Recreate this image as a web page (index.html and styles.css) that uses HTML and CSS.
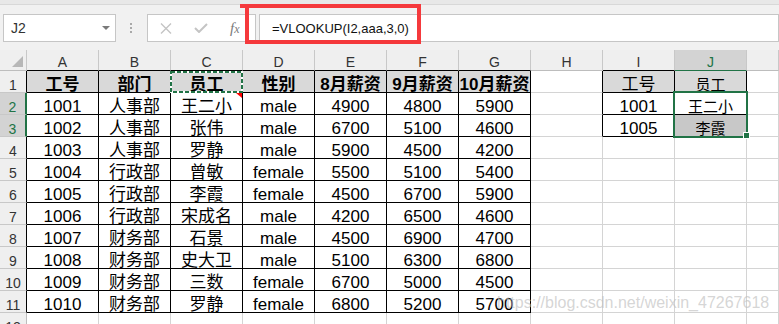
FILE: index.html
```html
<!DOCTYPE html>
<html lang="zh-CN">
<head>
  <meta charset="UTF-8">
  <meta name="viewport" content="width=device-width, initial-scale=1.0">
  <title>VLOOKUP</title>
  <link rel="stylesheet" href="styles.css">
</head>
<body>
  <div class="formula-bar">
    <div class="name-box"><span>J2</span><span class="caret"></span></div>
    <div class="grip"><i></i><i></i><i></i></div>
    <div class="fx-buttons">
      <svg class="btn-icon" width="12" height="11" viewBox="0 0 12 11"><path d="M1 0.5 L11 10.5 M11 0.5 L1 10.5" stroke="#c4c4c4" stroke-width="1.4" fill="none"/></svg>
      <svg class="btn-icon check" width="14" height="10" viewBox="0 0 14 10"><path d="M1 5 L5 9 L13 1" stroke="#c4c4c4" stroke-width="2" fill="none"/></svg>
      <span class="fx"><i>f</i><i class="x">x</i></span>
    </div>
    <div class="formula-input">=VLOOKUP(I2,aaa,3,0)</div>
    <div class="callout"></div>
  </div>
  <div class="sheet">
    <div class="grid" id="grid"></div>
    <svg class="ants" width="73" height="22" viewBox="0 0 73 22">
      <rect x="1" y="1" width="71" height="20" fill="none" stroke="#fff" stroke-width="2"/>
      <rect x="1" y="1" width="71" height="20" fill="none" stroke="#217346" stroke-width="2" stroke-dasharray="4 2"/>
    </svg>
    <div class="selection"><span class="handle"></span></div>
    <div class="watermark">https://blog.csdn.net/weixin_47267618</div>
  </div>
  <script>
    const letters = ['A','B','C','D','E','F','G','H','I','J',''];
    const data = [
      ['工号','部门','员工','性别','8月薪资','9月薪资','10月薪资','','工号','员工'],
      ['1001','人事部','王二小','male','4900','4800','5900','','1001','王二小'],
      ['1002','人事部','张伟','male','6700','5100','4600','','1005','李霞'],
      ['1003','人事部','罗静','male','5900','4500','4200'],
      ['1004','行政部','曾敏','female','5500','5100','5400'],
      ['1005','行政部','李霞','female','4500','6700','5900'],
      ['1006','行政部','宋成名','male','4200','6500','4600'],
      ['1007','财务部','石景','male','4500','6900','4700'],
      ['1008','财务部','史大卫','male','5100','6300','6800'],
      ['1009','财务部','三数','female','6700','5000','4500'],
      ['1010','财务部','罗静','female','6800','5200','5700'],
      []
    ];
    // bordered ranges: [firstRow, lastRow, firstCol, lastCol]
    const boxes = [[1, 11, 1, 7], [1, 3, 9, 10]];
    function inBox(r, c) {
      return boxes.some(b => r >= b[0] && r <= b[1] && c >= b[2] && c <= b[3]);
    }
    let html = '';
    for (let r = 0; r <= 12; r++) {
      for (let c = 0; c <= 11; c++) {
        const cls = [];
        let text = '';
        if (r === 0 && c === 0) {
          cls.push('corner');
        } else if (r === 0) {
          cls.push('col-hd');
          text = letters[c - 1];
          if (c === 10) cls.push('sel-col');
        } else if (c === 0) {
          cls.push('row-hd');
          text = r;
          if (r === 2 || r === 3) cls.push('sel-row');
        } else {
          cls.push('cell');
          text = (data[r - 1] && data[r - 1][c - 1]) || '';
          if (r === 1 && inBox(r, c)) cls.push('fill');
          if (r === 1 && c <= 7) cls.push('bold');
          if (c === 10 && r <= 3) cls.push('small');
          if (r === 3 && c === 10) cls.push('shade');
          if (r === 2 && c === 3) cls.push('note');
        }
        if (inBox(r, c) || inBox(r, c + 1)) cls.push('br');
        if (inBox(r, c) || inBox(r + 1, c)) cls.push('bb');
        html += `<div class="${cls.join(' ')}">${text}</div>`;
      }
    }
    document.getElementById('grid').innerHTML = html;
  </script>
</body>
</html>
```

FILE: styles.css
```css
body {
  margin: 0;
  width: 779px;
  height: 324px;
  overflow: hidden;
  background: #fff;
  font-family: "Liberation Sans", "Noto Sans CJK SC", sans-serif;
}
.formula-bar {
  position: relative;
  height: 50px;
  box-sizing: border-box;
  display: flex;
  align-items: flex-start;
  padding: 14px 0 0 3px;
  background: linear-gradient(#e8e8e8 0 4px, #d8d8d8 4px 5px, #f1f1f1 5px);
}
.name-box {
  width: 113px;
  height: 28px;
  box-sizing: border-box;
  border: 1px solid #c6c6c6;
  background: #fff;
  display: flex;
  align-items: center;
  padding-left: 7px;
  font: 14px "Liberation Sans", sans-serif;
  color: #333;
}
.caret {
  margin-left: auto;
  margin-right: 5px;
  width: 0;
  height: 0;
  border-left: 4px solid transparent;
  border-right: 4px solid transparent;
  border-top: 4px solid #7a7a7a;
}
.grip {
  margin: 9px 0 0 14px;
  width: 2px;
  display: flex;
  flex-direction: column;
  gap: 2px;
}
.grip i {
  width: 2px;
  height: 2px;
  background: #a9a9a9;
}
.fx-buttons {
  margin-left: 15px;
  width: 109px;
  height: 28px;
  box-sizing: border-box;
  border: 1px solid #c6c6c6;
  background: #fff;
  display: flex;
  align-items: center;
  padding-left: 12px;
}
.btn-icon { display: block; }
.check { margin-left: 22px; }
.fx {
  margin-left: 22px;
  font-family: "Liberation Serif", serif;
  color: #7a7a7a;
  font-size: 15px;
  line-height: 1;
}
.fx .x { font-size: 12px; }
.formula-input {
  flex: 1;
  margin-left: 3px;
  height: 28px;
  box-sizing: border-box;
  border: 1px solid #c6c6c6;
  background: #fff;
  padding-left: 12px;
  display: flex;
  align-items: center;
  font: 13px "Liberation Sans", sans-serif;
  color: #111;
}
.callout {
  position: absolute;
  left: 245px;
  top: 4px;
  width: 176px;
  height: 40px;
  box-sizing: border-box;
  border: 4px solid #f5393c;
}
.callout::before {
  content: "";
  position: absolute;
  left: -9px;
  top: -4px;
  width: 5px;
  height: 4px;
  background: #f5393c;
}
.sheet {
  position: relative;
  height: 274px;
  overflow: hidden;
}
.grid {
  display: grid;
  grid-template-columns: 27px repeat(10, 72px) 1fr;
  grid-template-rows: 21px repeat(12, 22px);
}
.grid > div {
  box-sizing: border-box;
  display: flex;
  justify-content: center;
  align-items: flex-end;
  white-space: nowrap;
}
.corner {
  position: relative;
  background: #efefef;
  border-right: 1px solid #c8c8c8;
  border-bottom: 1px solid #bdbdbd;
}
.corner::after {
  content: "";
  position: absolute;
  right: 3px;
  bottom: 3px;
  border-left: 11px solid transparent;
  border-bottom: 11px solid #b7b7b7;
}
.col-hd {
  background: #efefef;
  border-right: 1px solid #c8c8c8;
  border-bottom: 1px solid #bdbdbd;
  font: 14px/14px "Liberation Sans", sans-serif;
  color: #333;
  padding-bottom: 1px;
}
.row-hd {
  background: #efefef;
  border-right: 1px solid #bdbdbd;
  border-bottom: 1px solid #c8c8c8;
  font: 14px/14px "Liberation Sans", sans-serif;
  color: #333;
}
.cell {
  position: relative;
  border-right: 1px solid #d4d4d4;
  border-bottom: 1px solid #d4d4d4;
  font-size: 17px;
  line-height: 15px;
  color: #000;
}
.fill { background: #d9d9d9; }
.bold { font-weight: 700; }
.small { font-size: 15px; }
.shade { background: #c8c8c8; }
.note::after {
  content: "";
  position: absolute;
  top: 0;
  right: 0;
  border-left: 6px solid transparent;
  border-top: 5px solid #f00;
}
.br { border-right-color: #000; }
.bb { border-bottom-color: #000; }
.sel-col {
  background: #d3d3d3;
  color: #217346;
  border-bottom-color: #217346;
}
.sel-row {
  background: #d3d3d3;
  color: #217346;
  border-right: 2px solid #217346;
}
.ants {
  position: absolute;
  left: 170px;
  top: 21px;
}
.selection {
  position: absolute;
  left: 673px;
  top: 41px;
  width: 75px;
  height: 47px;
  box-sizing: border-box;
  border: 2px solid #217346;
}
.handle {
  position: absolute;
  right: -4px;
  bottom: -3px;
  width: 5px;
  height: 5px;
  background: #217346;
  border: 1px solid #fff;
}
.watermark {
  position: absolute;
  left: 497px;
  top: 244px;
  font: 16px/18px "Liberation Sans", sans-serif;
  color: rgba(190, 190, 190, 0.65);
  white-space: nowrap;
}
```
